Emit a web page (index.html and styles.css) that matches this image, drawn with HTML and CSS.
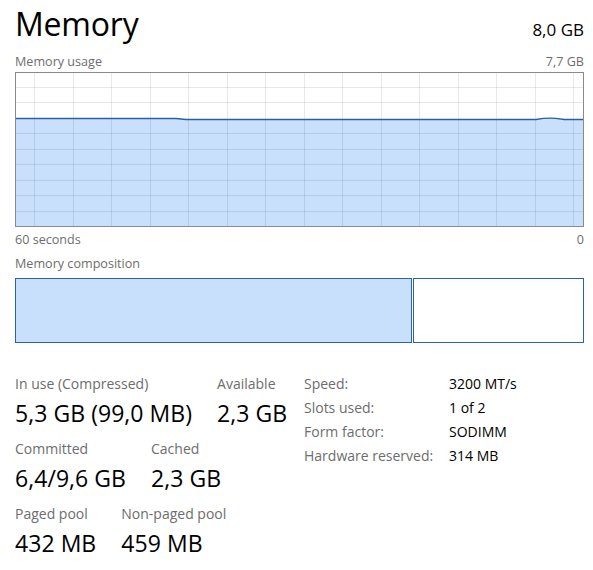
FILE: index.html
```html
<!DOCTYPE html>
<html>
<head>
<meta charset="utf-8">
<link rel="stylesheet" href="styles.css">
</head>
<body>
<div class="page">
  <div class="header">
    <div class="title">Memory</div>
    <div class="total">8,0 GB</div>
  </div>
  <div class="caption caption-top">
    <span>Memory usage</span>
    <span>7,7 GB</span>
  </div>
  <div class="graph">
    <svg class="graph-svg" viewBox="0 0 567 153" preserveAspectRatio="none" width="567" height="153">
      <path class="area" d="M0,45.5 L160,45.5 L170,46.5 L520,46.5 Q530,44.6 540,45.3 L548,46.5 L567,46.5 L567,153 L0,153 Z"/>
      <g class="grid">
        <line x1="18.5" y1="0" x2="18.5" y2="153"/>
        <line x1="57.5" y1="0" x2="57.5" y2="153"/>
        <line x1="95.5" y1="0" x2="95.5" y2="153"/>
        <line x1="134.5" y1="0" x2="134.5" y2="153"/>
        <line x1="172.5" y1="0" x2="172.5" y2="153"/>
        <line x1="211.5" y1="0" x2="211.5" y2="153"/>
        <line x1="249.5" y1="0" x2="249.5" y2="153"/>
        <line x1="288.5" y1="0" x2="288.5" y2="153"/>
        <line x1="326.5" y1="0" x2="326.5" y2="153"/>
        <line x1="365.5" y1="0" x2="365.5" y2="153"/>
        <line x1="403.5" y1="0" x2="403.5" y2="153"/>
        <line x1="442.5" y1="0" x2="442.5" y2="153"/>
        <line x1="480.5" y1="0" x2="480.5" y2="153"/>
        <line x1="519.5" y1="0" x2="519.5" y2="153"/>
        <line x1="557.5" y1="0" x2="557.5" y2="153"/>
        <line x1="0" y1="14.5" x2="567" y2="14.5"/>
        <line x1="0" y1="29.5" x2="567" y2="29.5"/>
        <line x1="0" y1="60.5" x2="567" y2="60.5"/>
        <line x1="0" y1="76.5" x2="567" y2="76.5"/>
        <line x1="0" y1="91.5" x2="567" y2="91.5"/>
        <line x1="0" y1="107.5" x2="567" y2="107.5"/>
        <line x1="0" y1="122.5" x2="567" y2="122.5"/>
        <line x1="0" y1="138.5" x2="567" y2="138.5"/>
      </g>
      <path class="trace" d="M0,45.5 L160,45.5 L170,46.5 L520,46.5 Q530,44.6 540,45.3 L548,46.5 L567,46.5"/>
    </svg>
  </div>
  <div class="caption caption-axis">
    <span>60 seconds</span>
    <span>0</span>
  </div>
  <div class="caption caption-comp">
    <span>Memory composition</span>
  </div>
  <div class="composition">
    <div class="seg seg-used"></div>
    <div class="seg seg-standby"></div>
  </div>
  <div class="stats">
    <div class="stats-left">
      <div class="stat-row">
        <div class="stat">
          <div class="stat-label">In use (Compressed)</div>
          <div class="stat-value">5,3 GB (99,0 MB)</div>
        </div>
        <div class="stat">
          <div class="stat-label">Available</div>
          <div class="stat-value">2,3 GB</div>
        </div>
      </div>
      <div class="stat-row">
        <div class="stat">
          <div class="stat-label">Committed</div>
          <div class="stat-value">6,4/9,6 GB</div>
        </div>
        <div class="stat">
          <div class="stat-label">Cached</div>
          <div class="stat-value">2,3 GB</div>
        </div>
      </div>
      <div class="stat-row">
        <div class="stat">
          <div class="stat-label">Paged pool</div>
          <div class="stat-value">432 MB</div>
        </div>
        <div class="stat">
          <div class="stat-label">Non-paged pool</div>
          <div class="stat-value">459 MB</div>
        </div>
      </div>
    </div>
    <div class="stats-right">
      <div class="prop-label">Speed:</div><div class="prop-value">3200 MT/s</div>
      <div class="prop-label">Slots used:</div><div class="prop-value">1 of 2</div>
      <div class="prop-label">Form factor:</div><div class="prop-value">SODIMM</div>
      <div class="prop-label">Hardware reserved:</div><div class="prop-value">314 MB</div>
    </div>
  </div>
</div>
</body>
</html>
```

FILE: styles.css
```css
html, body {
  margin: 0;
  padding: 0;
  background: #ffffff;
}

body {
  font-family: "Open Sans", "Noto Sans", "Liberation Sans", sans-serif;
  color: #000000;
}

.page {
  width: 569px;
  padding: 4px 9px 0 15px;
}

.header {
  display: flex;
  justify-content: space-between;
  align-items: baseline;
  height: 42px;
}

.title {
  font-size: 32px;
  line-height: 40px;
  letter-spacing: -0.2px;
}

.total {
  font-size: 17px;
  line-height: 22px;
}

.caption {
  display: flex;
  justify-content: space-between;
  font-size: 12.6px;
  line-height: 16px;
  color: #6d6d6d;
}

.caption-top {
  margin-top: 8px;
}

.graph {
  margin-top: 2px;
  width: 569px;
  height: 155px;
  box-sizing: border-box;
  border: 1px solid #8a8a8a;
  overflow: hidden;
}

.graph-svg {
  display: block;
}

.area {
  fill: #c9e0fc;
}

.grid line {
  stroke: rgba(0, 0, 0, 0.09);
  stroke-width: 1;
}

.trace {
  fill: none;
  stroke: #2a5fa8;
  stroke-width: 1.3;
}

.caption-axis {
  margin-top: 5px;
}

.caption-comp {
  margin-top: 8px;
}

.composition {
  margin-top: 6px;
  display: flex;
  gap: 1px;
  height: 65px;
}

.seg {
  box-sizing: border-box;
  border: 1.5px solid #2a62b0;
  height: 100%;
}

.seg-used {
  width: 397px;
  background: #c9e0fc;
}

.seg-standby {
  flex: 1;
  background: #ffffff;
}

.stats {
  margin-top: 31px;
  display: flex;
}

.stats-left {
  width: 289px;
  display: flex;
  flex-direction: column;
  gap: 11px;
}

.stat-row {
  display: flex;
  gap: 25px;
}

.stat-label {
  font-size: 14px;
  line-height: 20px;
  color: #6d6d6d;
  margin-bottom: 4px;
}

.stat-value {
  font-size: 23px;
  line-height: 30px;
  letter-spacing: 0.05px;
}

.stats-right {
  display: grid;
  grid-template-columns: 145px auto;
  grid-auto-rows: 24px;
  font-size: 14px;
  line-height: 24px;
  margin-top: -2px;
}

.prop-label {
  color: #6d6d6d;
}

.prop-value {
  color: #000000;
}
```
